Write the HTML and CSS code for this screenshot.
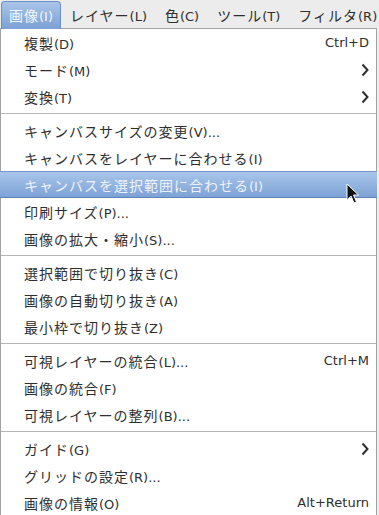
FILE: index.html
```html
<!DOCTYPE html>
<html lang="ja">
  <head>
    <meta charset="UTF-8" />
    <meta name="viewport" content="width=device-width, initial-scale=1.0" />
    <title>画像メニュー</title>
    <link rel="stylesheet" href="styles.css">
  </head>
  <body>
    <!-- メニューバー -->
    <div class="menubar" id="menubar"></div>

    <!-- ドロップダウン -->
    <div class="menu" id="menu"></div>

    <script>
      const barItems = ['画像(I)', 'レイヤー(L)', '色(C)', 'ツール(T)', 'フィルタ(R)'];

      const menuItems = [
        { label: '複製(D)', accel: 'Ctrl+D' },
        { label: 'モード(M)', sub: true },
        { label: '変換(T)', sub: true },
        { sep: true },
        { label: 'キャンバスサイズの変更(V)...' },
        { label: 'キャンバスをレイヤーに合わせる(I)' },
        { label: 'キャンバスを選択範囲に合わせる(I)', selected: true },
        { label: '印刷サイズ(P)...' },
        { label: '画像の拡大・縮小(S)...' },
        { sep: true },
        { label: '選択範囲で切り抜き(C)' },
        { label: '画像の自動切り抜き(A)' },
        { label: '最小枠で切り抜き(Z)' },
        { sep: true },
        { label: '可視レイヤーの統合(L)...', accel: 'Ctrl+M' },
        { label: '画像の統合(F)' },
        { label: '可視レイヤーの整列(B)...' },
        { sep: true },
        { label: 'ガイド(G)', sub: true },
        { label: 'グリッドの設定(R)...' },
        { label: '画像の情報(O)', accel: 'Alt+Return' },
      ];

      // 日本語部分とニーモニック部分を分ける
      function labelHtml(label) {
        const i = label.indexOf('(');
        return `<span class="jp">${label.slice(0, i)}</span>${label.slice(i)}`;
      }

      const arrowSvg = `<svg class="arrow" width="8" height="14" viewBox="0 0 8 14"><path d="M1.5 1.5 L6.5 7 L1.5 12.5" /></svg>`;
      const cursorSvg = `<svg class="cursor" width="14" height="22" viewBox="0 0 14 22"><path d="M1 1 L1 17 L5 13 L8 20 L10.5 19 L7.5 12 L12.5 12 Z" /></svg>`;

      const menubarElement = document.getElementById('menubar');
      barItems.forEach((item, index) => {
        const el = document.createElement('span');
        el.classList.add('bar-item');
        if (index === 0) el.classList.add('active');
        el.innerHTML = labelHtml(item);
        menubarElement.appendChild(el);
      });

      const menuElement = document.getElementById('menu');
      menuItems.forEach((item) => {
        const el = document.createElement('div');
        if (item.sep) {
          el.classList.add('sep');
        } else {
          el.classList.add('row');
          if (item.selected) el.classList.add('selected');
          el.innerHTML = `
            <span class="label">${labelHtml(item.label)}</span>
            ${item.accel ? `<span class="accel">${item.accel}</span>` : ''}
            ${item.sub ? arrowSvg : ''}
            ${item.selected ? cursorSvg : ''}
          `;
        }
        menuElement.appendChild(el);
      });
    </script>
  </body>
</html>
```

FILE: styles.css
```css
body {
  margin: 0;
  padding: 0;
  width: 379px;
  height: 515px;
  overflow: hidden;
  background-color: #efefef;
  font-family: "DejaVu Sans", "Noto Sans CJK JP", sans-serif;
  font-size: 13px;
  color: #2e2e2e;
}

.jp {
  font-family: "Noto Sans CJK JP", sans-serif;
  font-size: 14px;
  letter-spacing: 1px;
}

.menubar {
  display: flex;
  height: 28px;
  padding-left: 1px;
  box-sizing: border-box;
  align-items: flex-end;
  background-color: #ececec;
}

.bar-item {
  height: 26px;
  line-height: 26px;
  padding: 0 8px 0 8px;
  border: 1px solid transparent;
  border-bottom: none;
  color: #2e2e2e;
  white-space: nowrap;
}

.bar-item.active {
  color: #f4f7fc;
  background: linear-gradient(#a9c6ea, #7ba0d4);
  border-color: #6a8fc6;
  border-radius: 4px 4px 0 0;
  height: 27px;
  margin-bottom: -1px;
  padding: 0 7px 0 7px;
}

.menu {
  width: 377px;
  box-sizing: border-box;
  background-color: #fff;
  border: 1px solid #a3a3a3;
  border-bottom: none;
  height: 487px;
}

.row {
  position: relative;
  display: flex;
  align-items: center;
  justify-content: space-between;
  height: 27px;
  padding: 0 7px 0 23px;
  white-space: nowrap;
}

.accel {
  color: #2e2e2e;
}

.arrow path {
  fill: none;
  stroke: #2e2e2e;
  stroke-width: 2;
}

.sep {
  height: 0;
  margin: 3px 0;
  border-top: 1px solid #b5b5b5;
}

.selected {
  color: #edf2fa;
  background: linear-gradient(#a9c6ea, #7da2d5);
  border-top: 1px solid #7395c9;
  border-bottom: 1px solid #5f84bc;
  height: 25px;
  margin: 0 -1px;
  padding-left: 24px;
}

.cursor {
  position: absolute;
  left: 346px;
  top: 11px;
}

.cursor path {
  fill: #111;
  stroke: #fff;
  stroke-width: 1;
}
```
